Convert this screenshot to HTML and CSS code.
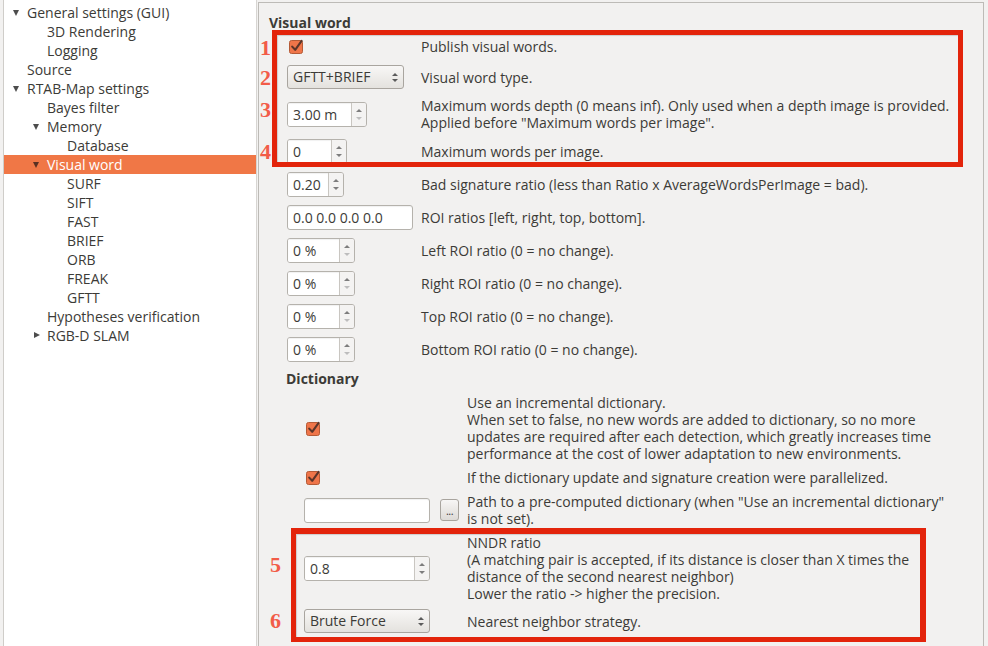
FILE: index.html
```html
<!DOCTYPE html>
<html>
<head>
<meta charset="utf-8">
<link rel="stylesheet" href="styles.css">
</head>
<body>
<div class="app">
  <div class="tree">
    <div class="node l1"><span class="tw down"></span>General settings (GUI)</div>
    <div class="node l2"><span class="tw"></span>3D Rendering</div>
    <div class="node l2"><span class="tw"></span>Logging</div>
    <div class="node l1"><span class="tw"></span>Source</div>
    <div class="node l1"><span class="tw down"></span>RTAB-Map settings</div>
    <div class="node l2"><span class="tw"></span>Bayes filter</div>
    <div class="node l2"><span class="tw down"></span>Memory</div>
    <div class="node l3"><span class="tw"></span>Database</div>
    <div class="node l2 sel"><span class="tw down"></span>Visual word</div>
    <div class="node l3"><span class="tw"></span>SURF</div>
    <div class="node l3"><span class="tw"></span>SIFT</div>
    <div class="node l3"><span class="tw"></span>FAST</div>
    <div class="node l3"><span class="tw"></span>BRIEF</div>
    <div class="node l3"><span class="tw"></span>ORB</div>
    <div class="node l3"><span class="tw"></span>FREAK</div>
    <div class="node l3"><span class="tw"></span>GFTT</div>
    <div class="node l2"><span class="tw"></span>Hypotheses verification</div>
    <div class="node l2"><span class="tw right"></span>RGB-D SLAM</div>
  </div>

  <div class="panel">
    <div class="sec-title">Visual word</div>
    <div class="form vw">
      <div class="ctl chk-row"><span class="check"><svg width="15" height="15" viewBox="0 0 15 15"><rect x="0.5" y="1.5" width="13" height="13" rx="2" fill="#ef7549" stroke="#b45a36"/><path d="M3.2 7.6 L6.2 10.8 L12.6 1.8" fill="none" stroke="#5b3529" stroke-width="2.1" stroke-linecap="round" stroke-linejoin="round"/></svg></span></div>
      <div class="lbl">Publish visual words.</div>

      <div class="ctl"><div class="combo w117">GFTT+BRIEF<span class="carets"></span></div></div>
      <div class="lbl">Visual word type.</div>

      <div class="ctl"><div class="spin w80"><span class="val">3.00 m</span><span class="btns"><i class="up"></i><i class="dn off"></i></span></div></div>
      <div class="lbl">Maximum words depth (0 means inf). Only used when a depth image is provided.<br>Applied before "Maximum words per image".</div>

      <div class="ctl"><div class="spin w60"><span class="val">0</span><span class="btns"><i class="up"></i><i class="dn"></i></span></div></div>
      <div class="lbl">Maximum words per image.</div>

      <div class="ctl"><div class="spin w57"><span class="val">0.20</span><span class="btns"><i class="up"></i><i class="dn"></i></span></div></div>
      <div class="lbl">Bad signature ratio (less than Ratio x AverageWordsPerImage = bad).</div>

      <div class="ctl"><div class="edit w126">0.0 0.0 0.0 0.0</div></div>
      <div class="lbl">ROI ratios [left, right, top, bottom].</div>

      <div class="ctl"><div class="spin w68"><span class="val">0 %</span><span class="btns"><i class="up"></i><i class="dn off"></i></span></div></div>
      <div class="lbl">Left ROI ratio (0 = no change).</div>

      <div class="ctl"><div class="spin w68"><span class="val">0 %</span><span class="btns"><i class="up"></i><i class="dn off"></i></span></div></div>
      <div class="lbl">Right ROI ratio (0 = no change).</div>

      <div class="ctl"><div class="spin w68"><span class="val">0 %</span><span class="btns"><i class="up"></i><i class="dn off"></i></span></div></div>
      <div class="lbl">Top ROI ratio (0 = no change).</div>

      <div class="ctl"><div class="spin w68"><span class="val">0 %</span><span class="btns"><i class="up"></i><i class="dn off"></i></span></div></div>
      <div class="lbl">Bottom ROI ratio (0 = no change).</div>
    </div>

    <div class="sub-title">Dictionary</div>
    <div class="form dict">
      <div class="ctl chk-row"><span class="check"><svg width="15" height="15" viewBox="0 0 15 15"><rect x="0.5" y="1.5" width="13" height="13" rx="2" fill="#ef7549" stroke="#b45a36"/><path d="M3.2 7.6 L6.2 10.8 L12.6 1.8" fill="none" stroke="#5b3529" stroke-width="2.1" stroke-linecap="round" stroke-linejoin="round"/></svg></span></div>
      <div class="lbl">Use an incremental dictionary.<br>When set to false, no new words are added to dictionary, so no more<br>updates are required after each detection, which greatly increases time<br>performance at the cost of lower adaptation to new environments.</div>

      <div class="ctl chk-row"><span class="check"><svg width="15" height="15" viewBox="0 0 15 15"><rect x="0.5" y="1.5" width="13" height="13" rx="2" fill="#ef7549" stroke="#b45a36"/><path d="M3.2 7.6 L6.2 10.8 L12.6 1.8" fill="none" stroke="#5b3529" stroke-width="2.1" stroke-linecap="round" stroke-linejoin="round"/></svg></span></div>
      <div class="lbl">If the dictionary update and signature creation were parallelized.</div>

      <div class="ctl path-row"><div class="edit w126"></div><div class="dots">...</div></div>
      <div class="lbl">Path to a pre-computed dictionary (when "Use an incremental dictionary"<br>is not set).</div>

      <div class="ctl"><div class="spin w126"><span class="val">0.8</span><span class="btns"><i class="up"></i><i class="dn"></i></span></div></div>
      <div class="lbl">NNDR ratio<br>(A matching pair is accepted, if its distance is closer than X times the<br>distance of the second nearest neighbor)<br>Lower the ratio -&gt; higher the precision.</div>

      <div class="ctl"><div class="combo w126">Brute Force<span class="carets"></span></div></div>
      <div class="lbl">Nearest neighbor strategy.</div>
    </div>
  </div>

  <div class="redbox b1"></div>
  <div class="redbox b2"></div>
  <span class="num n1">1</span>
  <span class="num n2">2</span>
  <span class="num n3">3</span>
  <span class="num n4">4</span>
  <span class="num n5">5</span>
  <span class="num n6">6</span>
</div>
</body>
</html>
```

FILE: styles.css
```css
html, body {
  margin: 0;
  padding: 0;
}
body {
  width: 988px;
  height: 646px;
  overflow: hidden;
  background: #f2f1f0;
  font-family: "Open Sans", "DejaVu Sans", sans-serif;
  font-size: 14px;
  color: #3c3b37;
}
.app {
  position: relative;
  display: flex;
  align-items: flex-start;
  width: 988px;
  height: 646px;
}

/* ---------- tree ---------- */
.tree {
  box-sizing: border-box;
  width: 254px;
  height: 646px;
  margin-left: 3px;
  background: #ffffff;
  border-left: 1px solid #cfcdc9;
  border-right: 1px solid #d7d5d2;
  padding-top: 3px;
}
.node {
  display: flex;
  align-items: center;
  height: 19px;
  line-height: 19px;
  white-space: nowrap;
}
.node.l1 { padding-left: 2px; }
.node.l2 { padding-left: 22px; }
.node.l3 { padding-left: 42px; }
.node.sel {
  background: #f07746;
  color: #ffffff;
}
.tw {
  position: relative;
  width: 21px;
  height: 19px;
  flex: none;
}
.tw.down::after {
  content: "";
  position: absolute;
  left: 7px;
  top: 7px;
  border-left: 3.5px solid transparent;
  border-right: 3.5px solid transparent;
  border-top: 6px solid #4d4d4d;
}
.node.sel .tw.down::after {
  border-top-color: #5a3022;
}
.tw.right::after {
  content: "";
  position: absolute;
  left: 8px;
  top: 6px;
  border-top: 3.5px solid transparent;
  border-bottom: 3.5px solid transparent;
  border-left: 6px solid #4d4d4d;
}

/* ---------- panel ---------- */
.panel {
  box-sizing: border-box;
  width: 726px;
  height: 660px;
  margin-left: 1px;
  margin-top: 2px;
  border: 1px solid #bdbbb7;
  border-bottom: none;
}
.sec-title, .sub-title {
  font-weight: bold;
  line-height: 17px;
}
.sec-title {
  margin: 11px 0 5px 10px;
}
.sub-title {
  margin: 8px 0 7px 27px;
}
.form {
  display: grid;
  column-gap: 8px;
  align-items: center;
  line-height: 17px;
}
.form.vw {
  grid-template-columns: 126px 1fr;
  row-gap: 8px;
  margin-left: 28px;
}
.form.dict {
  grid-template-columns: 155px 1fr;
  row-gap: 7px;
  margin-left: 45px;
}
.lbl {
  white-space: nowrap;
}
.ctl {
  display: flex;
  align-items: center;
}
.chk-row {
  height: 21px;
  padding-left: 2px;
}
.form.dict .chk-row {
  height: 17px;
}
.check {
  display: block;
  width: 15px;
  height: 15px;
}
.check svg { display: block; }

/* line edit */
.edit {
  box-sizing: border-box;
  height: 25px;
  background: #ffffff;
  border: 1px solid #b5b2ac;
  border-radius: 3px;
  padding-left: 5px;
  line-height: 23px;
  box-shadow: inset 0 1px 1px rgba(0,0,0,0.06);
}
.path-row {
  gap: 10px;
}
.dots {
  box-sizing: border-box;
  width: 19px;
  height: 22px;
  border: 1px solid #a8a49e;
  border-radius: 3px;
  background: linear-gradient(#f7f6f5, #dddad6);
  font-size: 11px;
  line-height: 22px;
  text-align: center;
  letter-spacing: -0.5px;
}

/* spin box */
.spin {
  box-sizing: border-box;
  display: flex;
  height: 25px;
  border: 1px solid #b5b2ac;
  border-radius: 3px;
  overflow: hidden;
}
.spin .val {
  flex: 1;
  background: #ffffff;
  padding-left: 5px;
  line-height: 23px;
  box-shadow: inset 0 1px 1px rgba(0,0,0,0.06);
}
.spin .btns {
  position: relative;
  width: 14px;
  flex: none;
  border-left: 1px solid #c9c6c1;
  background: #f4f3f2;
}
.spin i {
  position: absolute;
  left: 4px;
  border-left: 3px solid transparent;
  border-right: 3px solid transparent;
}
.spin i.up {
  top: 6px;
  border-bottom: 3px solid #7d7d7d;
}
.spin i.dn {
  top: 14px;
  border-top: 3px solid #7d7d7d;
}
.spin i.dn.off {
  border-top-color: #bdbdbd;
}

.w57 { width: 57px; }
.w60 { width: 60px; }
.w68 { width: 68px; }
.w80 { width: 80px; }
.w117 { width: 117px; }
.w126 { width: 126px; }

/* combo */
.combo {
  box-sizing: border-box;
  position: relative;
  height: 24px;
  border: 1px solid #a9a59f;
  border-radius: 3px;
  background: linear-gradient(#f8f7f6, #e4e2de);
  padding-left: 5px;
  line-height: 22px;
}
.carets {
  position: absolute;
  right: 5px;
  top: 6px;
  width: 6px;
  height: 11px;
}
.carets::before, .carets::after {
  content: "";
  position: absolute;
  left: 0;
  border-left: 3px solid transparent;
  border-right: 3px solid transparent;
}
.carets::before {
  top: 1px;
  border-bottom: 3px solid #5b5b5b;
}
.carets::after {
  top: 7px;
  border-top: 3px solid #5b5b5b;
}

/* annotations */
.redbox {
  position: absolute;
  box-sizing: border-box;
  border: 5px solid #e3240b;
  box-shadow: inset 1px 1px 1px rgba(0,0,0,0.15);
}
.redbox.b1 {
  left: 272px;
  top: 30px;
  width: 691px;
  height: 137px;
}
.redbox.b2 {
  left: 291px;
  top: 528px;
  width: 635px;
  height: 114px;
  border-width: 6px 6px 5px 5px;
}
.num {
  position: absolute;
  font-family: "Liberation Serif", serif;
  font-weight: bold;
  font-size: 22px;
  line-height: 22px;
  color: #f25c48;
}
.n1 { left: 260px; top: 37px; }
.n2 { left: 260px; top: 67px; }
.n3 { left: 260px; top: 99px; }
.n4 { left: 260px; top: 141px; }
.n5 { left: 270px; top: 554px; }
.n6 { left: 270px; top: 610px; }
```
